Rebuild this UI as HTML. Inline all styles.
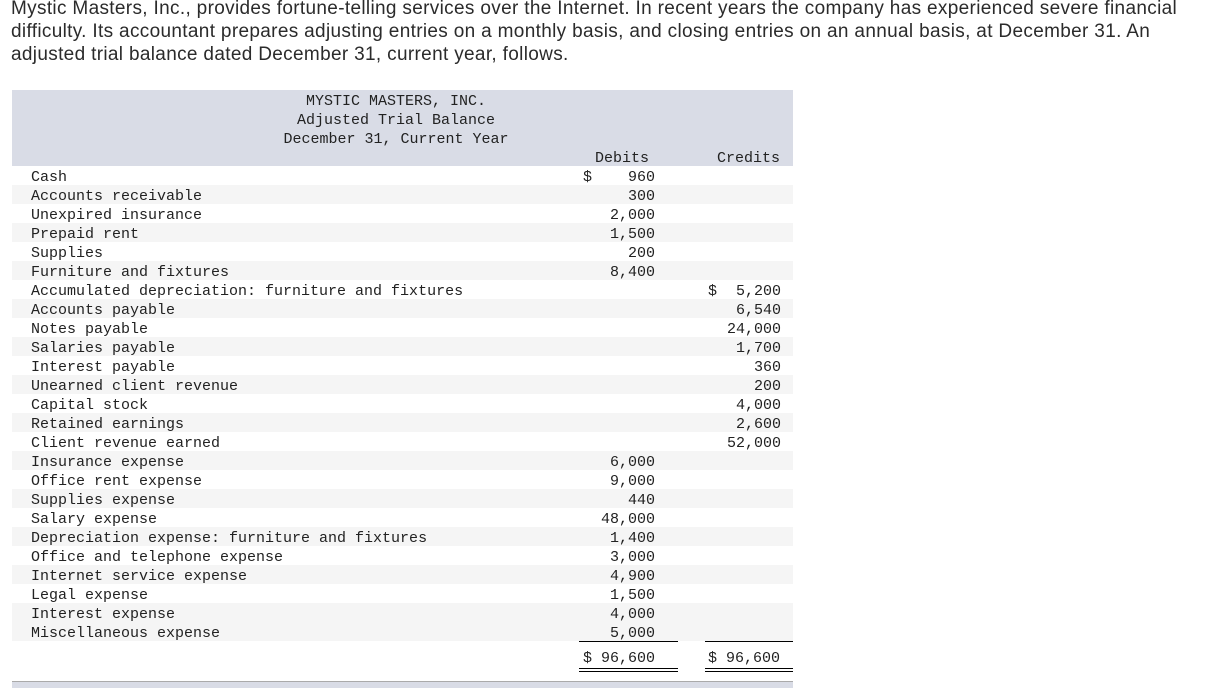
<!DOCTYPE html>
<html><head><meta charset="utf-8"><style>
body{margin:0;width:1207px;height:695px;background:#fff;position:relative;overflow:hidden}
.intro{position:absolute;left:11px;top:-3px;font-family:"Liberation Sans",sans-serif;font-size:19px;letter-spacing:0.33px;line-height:23px;color:#2b2b2b;white-space:nowrap}
.hdr{position:absolute;left:12px;top:90px;width:781px;height:76px;background:#d9dce6}
.m{font-family:"Liberation Mono",monospace;font-size:15px;color:#222;white-space:pre}
.t{position:absolute;left:0;width:781px;text-align:center;line-height:19px}
.row{position:absolute;left:12px;width:781px;height:19px;line-height:23px}
.row.g{background:#f5f5f5}
.row span{position:absolute}
.l{left:19px}
.d{right:138px}
.c{right:12px}
.ds{left:571px}
.cs{left:696px}
.line{position:absolute;height:1px;background:#000}
.bar{position:absolute;left:12px;top:681px;width:781px;height:6px;background:#d9dce6;border-top:1px solid #aaa}
</style></head><body>
<div class="intro">Mystic Masters, Inc., provides fortune-telling services over the Internet. In recent years the company has experienced severe financial<br>difficulty. Its accountant prepares adjusting entries on a monthly basis, and closing entries on an annual basis, at December 31. An<br>adjusted trial balance dated December 31, current year, follows.</div>
<div class="hdr m">
<div class="t" style="top:2px;width:768px">MYSTIC MASTERS, INC.</div>
<div class="t" style="top:21px;width:768px">Adjusted Trial Balance</div>
<div class="t" style="top:40px;width:768px">December 31, Current Year</div>
<div style="position:absolute;left:583px;top:59px;line-height:19px">Debits</div>
<div style="position:absolute;left:705px;top:59px;line-height:19px">Credits</div>
</div>
<div class="m">
<div class="row" style="top:166px"><span class="l">Cash</span><span class="ds">$</span><span class="d">960</span></div>
<div class="row g" style="top:185px"><span class="l">Accounts receivable</span><span class="d">300</span></div>
<div class="row" style="top:204px"><span class="l">Unexpired insurance</span><span class="d">2,000</span></div>
<div class="row g" style="top:223px"><span class="l">Prepaid rent</span><span class="d">1,500</span></div>
<div class="row" style="top:242px"><span class="l">Supplies</span><span class="d">200</span></div>
<div class="row g" style="top:261px"><span class="l">Furniture and fixtures</span><span class="d">8,400</span></div>
<div class="row" style="top:280px"><span class="l">Accumulated depreciation: furniture and fixtures</span><span class="cs">$</span><span class="c">5,200</span></div>
<div class="row g" style="top:299px"><span class="l">Accounts payable</span><span class="c">6,540</span></div>
<div class="row" style="top:318px"><span class="l">Notes payable</span><span class="c">24,000</span></div>
<div class="row g" style="top:337px"><span class="l">Salaries payable</span><span class="c">1,700</span></div>
<div class="row" style="top:356px"><span class="l">Interest payable</span><span class="c">360</span></div>
<div class="row g" style="top:375px"><span class="l">Unearned client revenue</span><span class="c">200</span></div>
<div class="row" style="top:394px"><span class="l">Capital stock</span><span class="c">4,000</span></div>
<div class="row g" style="top:413px"><span class="l">Retained earnings</span><span class="c">2,600</span></div>
<div class="row" style="top:432px"><span class="l">Client revenue earned</span><span class="c">52,000</span></div>
<div class="row g" style="top:451px"><span class="l">Insurance expense</span><span class="d">6,000</span></div>
<div class="row" style="top:470px"><span class="l">Office rent expense</span><span class="d">9,000</span></div>
<div class="row g" style="top:489px"><span class="l">Supplies expense</span><span class="d">440</span></div>
<div class="row" style="top:508px"><span class="l">Salary expense</span><span class="d">48,000</span></div>
<div class="row g" style="top:527px"><span class="l">Depreciation expense: furniture and fixtures</span><span class="d">1,400</span></div>
<div class="row" style="top:546px"><span class="l">Office and telephone expense</span><span class="d">3,000</span></div>
<div class="row g" style="top:565px"><span class="l">Internet service expense</span><span class="d">4,900</span></div>
<div class="row" style="top:584px"><span class="l">Legal expense</span><span class="d">1,500</span></div>
<div class="row g" style="top:603px"><span class="l">Interest expense</span><span class="d">4,000</span></div>
<div class="row g" style="top:622px"><span class="l">Miscellaneous expense</span><span class="d">5,000</span></div>
<div class="row" style="top:647px"><span class="ds">$ 96,600</span><span class="cs">$ 96,600</span></div>
</div>
<div class="line" style="left:579px;top:641px;width:99px"></div>
<div class="line" style="left:705px;top:641px;width:88px"></div>
<div class="line" style="left:579px;top:668px;width:99px"></div>
<div class="line" style="left:579px;top:671px;width:99px"></div>
<div class="line" style="left:705px;top:668px;width:88px"></div>
<div class="line" style="left:705px;top:671px;width:88px"></div>
<div class="bar"></div>
</body></html>
